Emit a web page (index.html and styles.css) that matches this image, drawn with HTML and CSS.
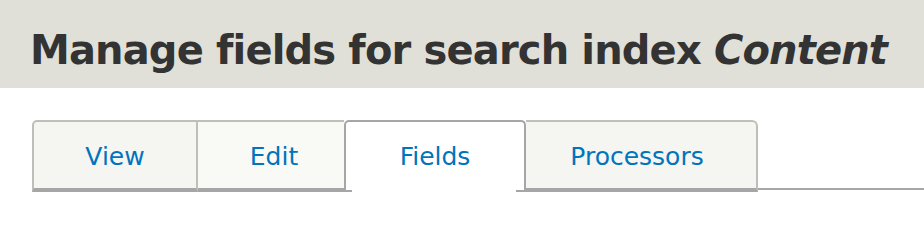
FILE: index.html
```html
<!DOCTYPE html>
<html lang="en">
<head>
<meta charset="utf-8">
<title>Manage fields for search index Content</title>
<link rel="stylesheet" href="styles.css">
</head>
<body>
<header class="page-header">
  <h1 class="page-title">Manage fields for search index <em>Content</em></h1>
</header>
<nav class="tabs">
  <a class="tab tab--first" href="#">View</a>
  <a class="tab tab--hover" href="#">Edit</a>
  <a class="tab tab--active" href="#">Fields</a>
  <a class="tab tab--last" href="#">Processors</a>
  <div class="tabs__rest"></div>
</nav>
</body>
</html>
```
FILE: styles.css
```css
html, body {
  margin: 0;
  padding: 0;
  background: #fff;
}
body {
  font-family: "DejaVu Sans", "Liberation Sans", sans-serif;
  color: #333;
}
.page-header {
  background: #e0e0d8;
  height: 88px;
  box-sizing: border-box;
  padding: 26px 0 0 30px;
}
.page-title {
  margin: 0;
  font-size: 40px;
  line-height: 48px;
  font-weight: bold;
  letter-spacing: -0.85px;
  color: #333;
  white-space: nowrap;
}
.page-title em {
  font-style: italic;
}
.tabs {
  display: flex;
  align-items: flex-start;
  margin: 32px 0 0 32px;
}
.tab {
  display: block;
  box-sizing: border-box;
  height: 72px;
  padding-top: 3px;
  line-height: 63px;
  text-align: center;
  font-size: 25px;
  color: #0074bd;
  text-decoration: none;
  background: #f5f5f2;
  border-top: 2px solid #bfbfba;
  border-bottom: 4px solid #a6a6a6;
}
.tab--first {
  width: 166px;
  border-left: 2px solid #bfbfba;
  border-right: 2px solid #bfbfba;
  border-top-left-radius: 5px;
}
.tab--hover {
  width: 146px;
  padding-left: 6px;
  background: #f9f9f6;
}
.tab--active {
  position: relative;
  width: 182px;
  background: #fff;
  border: 2px solid #a6a6a6;
  border-bottom: 0;
  border-radius: 5px 5px 0 0;
}
.tab--active::before,
.tab--active::after {
  content: "";
  position: absolute;
  bottom: 0;
  height: 2px;
  background: #a6a6a6;
}
.tab--active::before {
  left: -2px;
  width: 8px;
}
.tab--active::after {
  right: -2px;
  width: 10px;
}
.tab--last {
  width: 232px;
  padding-right: 8px;
  border-right: 2px solid #bfbfba;
  border-top-right-radius: 6px;
}
.tabs__rest {
  flex: 1;
  box-sizing: border-box;
  height: 70px;
  border-bottom: 2px solid #a6a6a6;
}
```
